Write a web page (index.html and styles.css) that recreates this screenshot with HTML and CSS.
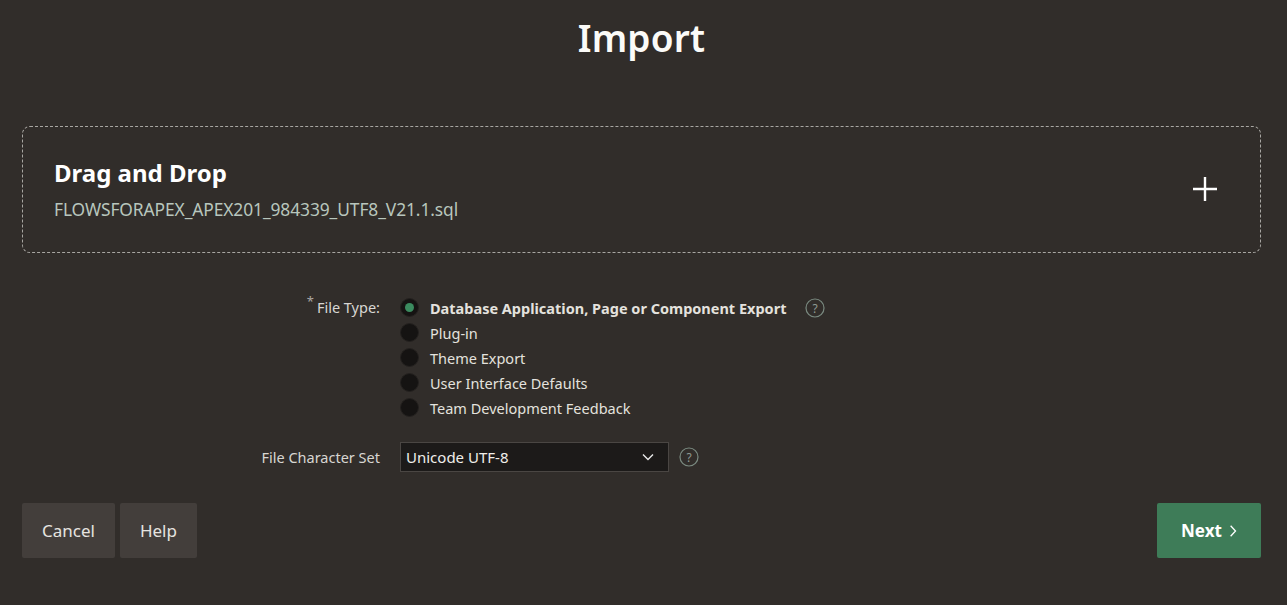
FILE: index.html
```html
<!DOCTYPE html>
<html>
<head>
<meta charset="utf-8">
<title>Import</title>
<link rel="stylesheet" href="styles.css">
</head>
<body>
<div class="page">
  <h1 class="title">Import</h1>
  <div class="drop">
    <div class="drop-text">
      <div class="drop-head">Drag and Drop</div>
      <div class="drop-file">FLOWSFORAPEX_APEX201_984339_UTF8_V21.1.sql</div>
    </div>
    <svg class="plus" width="26" height="26" viewBox="0 0 26 26"><path d="M13 1V25M1 13H25" stroke="#fff" stroke-width="2.4" fill="none"/></svg>
  </div>
  <div class="form">
    <div class="label label-top"><span class="req">*</span>File Type:</div>
    <div class="radios">
      <div class="radio-row"><span class="radio checked"></span><span class="rlabel bold">Database Application, Page or Component Export</span><span class="help"><svg width="20" height="20" viewBox="0 0 20 20"><circle cx="10" cy="10" r="9" stroke="#7a8a80" stroke-width="1.2" fill="none"/><text x="10" y="14.5" text-anchor="middle" font-size="12" fill="#8f9a93" font-family="Noto Sans, sans-serif">?</text></svg></span></div>
      <div class="radio-row"><span class="radio"></span><span class="rlabel">Plug-in</span></div>
      <div class="radio-row"><span class="radio"></span><span class="rlabel">Theme Export</span></div>
      <div class="radio-row"><span class="radio"></span><span class="rlabel">User Interface Defaults</span></div>
      <div class="radio-row"><span class="radio"></span><span class="rlabel">Team Development Feedback</span></div>
    </div>
    <div class="label label-mid">File Character Set</div>
    <div class="select-row">
      <div class="select"><span>Unicode UTF-8</span><svg width="12" height="8" viewBox="0 0 12 8"><path d="M1 1.5L6 6.5L11 1.5" stroke="#e8e8e8" stroke-width="1.4" fill="none"/></svg></div>
      <span class="help"><svg width="20" height="20" viewBox="0 0 20 20"><circle cx="10" cy="10" r="9" stroke="#7a8a80" stroke-width="1.2" fill="none"/><text x="10" y="14.5" text-anchor="middle" font-size="12" fill="#8f9a93" font-family="Noto Sans, sans-serif">?</text></svg></span>
    </div>
  </div>
  <div class="buttons">
    <div class="left">
      <button class="btn">Cancel</button>
      <button class="btn">Help</button>
    </div>
    <button class="btn next">Next <svg width="10" height="16" viewBox="0 0 10 16"><path d="M2 1.5L8 8L2 14.5" stroke="#fff" stroke-width="1.6" fill="none"/></svg></button>
  </div>
</div>
</body>
</html>
```

FILE: styles.css
```css
html, body {
  margin: 0;
  padding: 0;
  background: #312d2a;
  color: #f0f0ee;
  font-family: "Noto Sans", "Open Sans", sans-serif;
}
.page {
  padding: 0 26px 0 22px;
  height: 605px;
  box-sizing: border-box;
}
.title {
  margin: 0;
  padding-top: 14px;
  height: 126px;
  box-sizing: border-box;
  text-align: center;
  font-size: 37px;
  font-weight: 600;
  line-height: 48px;
  color: #fbfbf8;
  letter-spacing: 0.2px;
}
.drop {
  height: 127px;
  box-sizing: border-box;
  border: 1px dashed #a8a6a2;
  border-radius: 8px;
  display: flex;
  align-items: center;
  justify-content: space-between;
  padding: 0 42px 0 31px;
}
.drop-text {
  display: flex;
  flex-direction: column;
}
.drop-head {
  font-size: 24px;
  font-weight: 700;
  line-height: 32px;
  color: #ffffff;
}
.drop-file {
  font-size: 17.4px;
  line-height: 28px;
  margin-top: 6px;
  color: #b8c6bd;
  letter-spacing: -0.1px;
}
.plus { display: block; margin-top: -2px; }
.form {
  display: grid;
  grid-template-columns: 358px auto;
  column-gap: 20px;
  row-gap: 22px;
  margin-top: 42px;
  align-items: start;
}
.label {
  text-align: right;
  font-size: 14.5px;
  color: #d8d6d2;
}
.label-top { line-height: 25px; }
.label-mid { line-height: 30px; }
.req {
  color: #a9a6a2;
  font-size: 13px;
  position: relative;
  top: -7px;
  margin-right: 3px;
}
.radios { display: flex; flex-direction: column; }
.radio-row {
  display: flex;
  align-items: center;
  height: 25px;
}
.radio {
  width: 19px;
  height: 19px;
  border-radius: 50%;
  background: #151312;
  box-sizing: border-box;
  border: 1px solid #24211f;
  position: relative;
  flex: none;
}
.radio.checked::after {
  content: "";
  position: absolute;
  left: 4px;
  top: 4px;
  width: 9px;
  height: 9px;
  border-radius: 50%;
  background: #3b8b5f;
}
.rlabel {
  margin-left: 11px;
  font-size: 14.5px;
  color: #e4e2de;
}
.rlabel.bold { font-weight: 700; }
.help {
  display: inline-flex;
  margin-left: 19px;
}
.help svg { display: block; }
.select-row {
  display: flex;
  align-items: center;
}
.select {
  width: 269px;
  height: 30px;
  box-sizing: border-box;
  background: #1c1a19;
  border: 1px solid #4a4643;
  display: flex;
  align-items: center;
  justify-content: space-between;
  padding: 0 14px 0 5px;
  font-size: 15px;
  color: #f0eeea;
}
.select-row .help { margin-left: 10px; }
.buttons {
  display: flex;
  justify-content: space-between;
  margin-top: 31px;
}
.left { display: flex; gap: 5px; }
.btn {
  height: 55px;
  border: none;
  background: #433e3b;
  color: #e6e4e0;
  font-family: "Noto Sans", "Open Sans", sans-serif;
  font-size: 17px;
  padding: 0 20px;
  border-radius: 2px;
}
.btn.next {
  background: #3e7c58;
  color: #ffffff;
  font-weight: 700;
  padding: 0 24px;
  width: 104px;
  display: flex;
  align-items: center;
  justify-content: center;
  gap: 7px;
}
```
